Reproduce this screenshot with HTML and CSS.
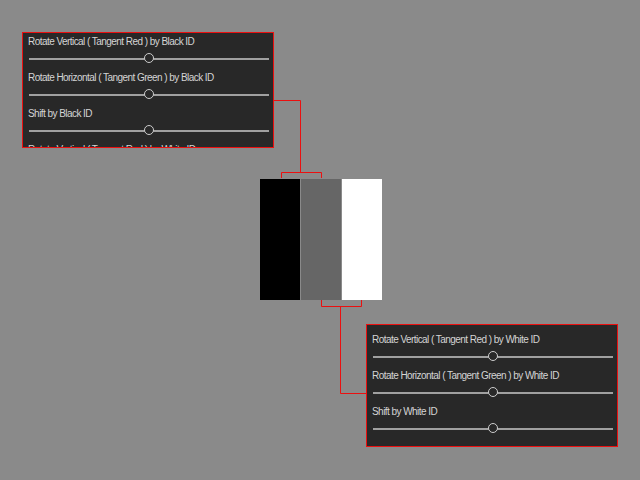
FILE: index.html
```html
<!DOCTYPE html>
<html lang="en">
<head>
    <meta charset="UTF-8">
    <title>Tangent by ID</title>
    <link rel="stylesheet" href="styles.css">
</head>
<body>
    <div class="canvas">
        <svg class="wires" width="640" height="480" viewBox="0 0 640 480">
            <polyline points="274,100.5 300.5,100.5 300.5,172.5" />
            <polyline points="281.5,178 281.5,172.5 321.5,172.5 321.5,178" />
            <polyline points="321.5,300 321.5,306.5 361.5,306.5 361.5,300" />
            <polyline points="340.5,306.5 340.5,393.5 366,393.5" />
        </svg>

        <div class="swatches">
            <div class="swatch black"></div>
            <div class="swatch grey"></div>
            <div class="swatch white"></div>
        </div>

        <div class="panel panel-top">
            <div class="list list-top">
                <div class="row">
                    <div class="label">Rotate Vertical ( Tangent Red ) by Black ID</div>
                    <div class="slider"><div class="track"></div><div class="thumb"></div></div>
                </div>
                <div class="row">
                    <div class="label">Rotate Horizontal ( Tangent Green ) by Black ID</div>
                    <div class="slider"><div class="track"></div><div class="thumb"></div></div>
                </div>
                <div class="row">
                    <div class="label">Shift by Black ID</div>
                    <div class="slider"><div class="track"></div><div class="thumb"></div></div>
                </div>
                <div class="row">
                    <div class="label">Rotate Vertical ( Tangent Red ) by White ID</div>
                    <div class="slider"><div class="track"></div><div class="thumb"></div></div>
                </div>
            </div>
        </div>

        <div class="panel panel-bottom">
            <div class="list list-bottom">
                <div class="row">
                    <div class="label">Rotate Vertical ( Tangent Red ) by Black ID</div>
                    <div class="slider"><div class="track"></div><div class="thumb"></div></div>
                </div>
                <div class="row">
                    <div class="label">Rotate Horizontal ( Tangent Green ) by Black ID</div>
                    <div class="slider"><div class="track"></div><div class="thumb"></div></div>
                </div>
                <div class="row">
                    <div class="label">Shift by Black ID</div>
                    <div class="slider"><div class="track"></div><div class="thumb"></div></div>
                </div>
                <div class="row">
                    <div class="label">Rotate Vertical ( Tangent Red ) by White ID</div>
                    <div class="slider"><div class="track"></div><div class="thumb"></div></div>
                </div>
                <div class="row">
                    <div class="label">Rotate Horizontal ( Tangent Green ) by White ID</div>
                    <div class="slider"><div class="track"></div><div class="thumb"></div></div>
                </div>
                <div class="row">
                    <div class="label">Shift by White ID</div>
                    <div class="slider"><div class="track"></div><div class="thumb"></div></div>
                </div>
            </div>
        </div>
    </div>
</body>
</html>
```

FILE: styles.css
```css
body {
    margin: 0;
    padding: 0;
    background-color: rgb(138, 138, 138);
    font-family: "Liberation Sans", Arial, sans-serif;
}
.canvas {
    position: relative;
    width: 640px;
    height: 480px;
    overflow: hidden;
}
.wires {
    position: absolute;
    left: 0;
    top: 0;
}
.wires polyline {
    fill: none;
    stroke: rgb(235, 16, 16);
    stroke-width: 1;
}
.swatches {
    position: absolute;
    left: 260px;
    top: 179px;
    display: flex;
    gap: 1px;
}
.swatch {
    width: 40px;
    height: 121px;
}
.black {
    background-color: rgb(0, 0, 0);
}
.grey {
    background-color: rgb(102, 102, 102);
}
.white {
    background-color: rgb(255, 255, 255);
}
.panel {
    position: absolute;
    width: 250px;
    background-color: rgb(40, 40, 40);
    border: 1px solid rgb(235, 16, 16);
    overflow: hidden;
}
.panel-top {
    left: 22px;
    top: 32px;
    height: 114px;
}
.panel-bottom {
    left: 366px;
    top: 324px;
    height: 121px;
}
.list-top {
    margin-top: -1px;
}
.list-bottom {
    margin-top: -103px;
}
.row {
    height: 36px;
}
.label {
    height: 17px;
    padding-top: 1px;
    line-height: 17px;
    padding-left: 5px;
    font-size: 10px;
    letter-spacing: -0.55px;
    color: rgb(212, 212, 212);
    white-space: nowrap;
}
.slider {
    position: relative;
    width: 240px;
    height: 18px;
    margin-left: 6px;
}
.track {
    position: absolute;
    left: 0;
    top: 8px;
    width: 100%;
    height: 2px;
    background-color: rgb(160, 160, 160);
}
.thumb {
    position: absolute;
    left: 115px;
    top: 3px;
    width: 8px;
    height: 8px;
    border: 1.5px solid rgb(204, 204, 204);
    border-radius: 50%;
    background-color: rgb(40, 40, 40);
}
```
